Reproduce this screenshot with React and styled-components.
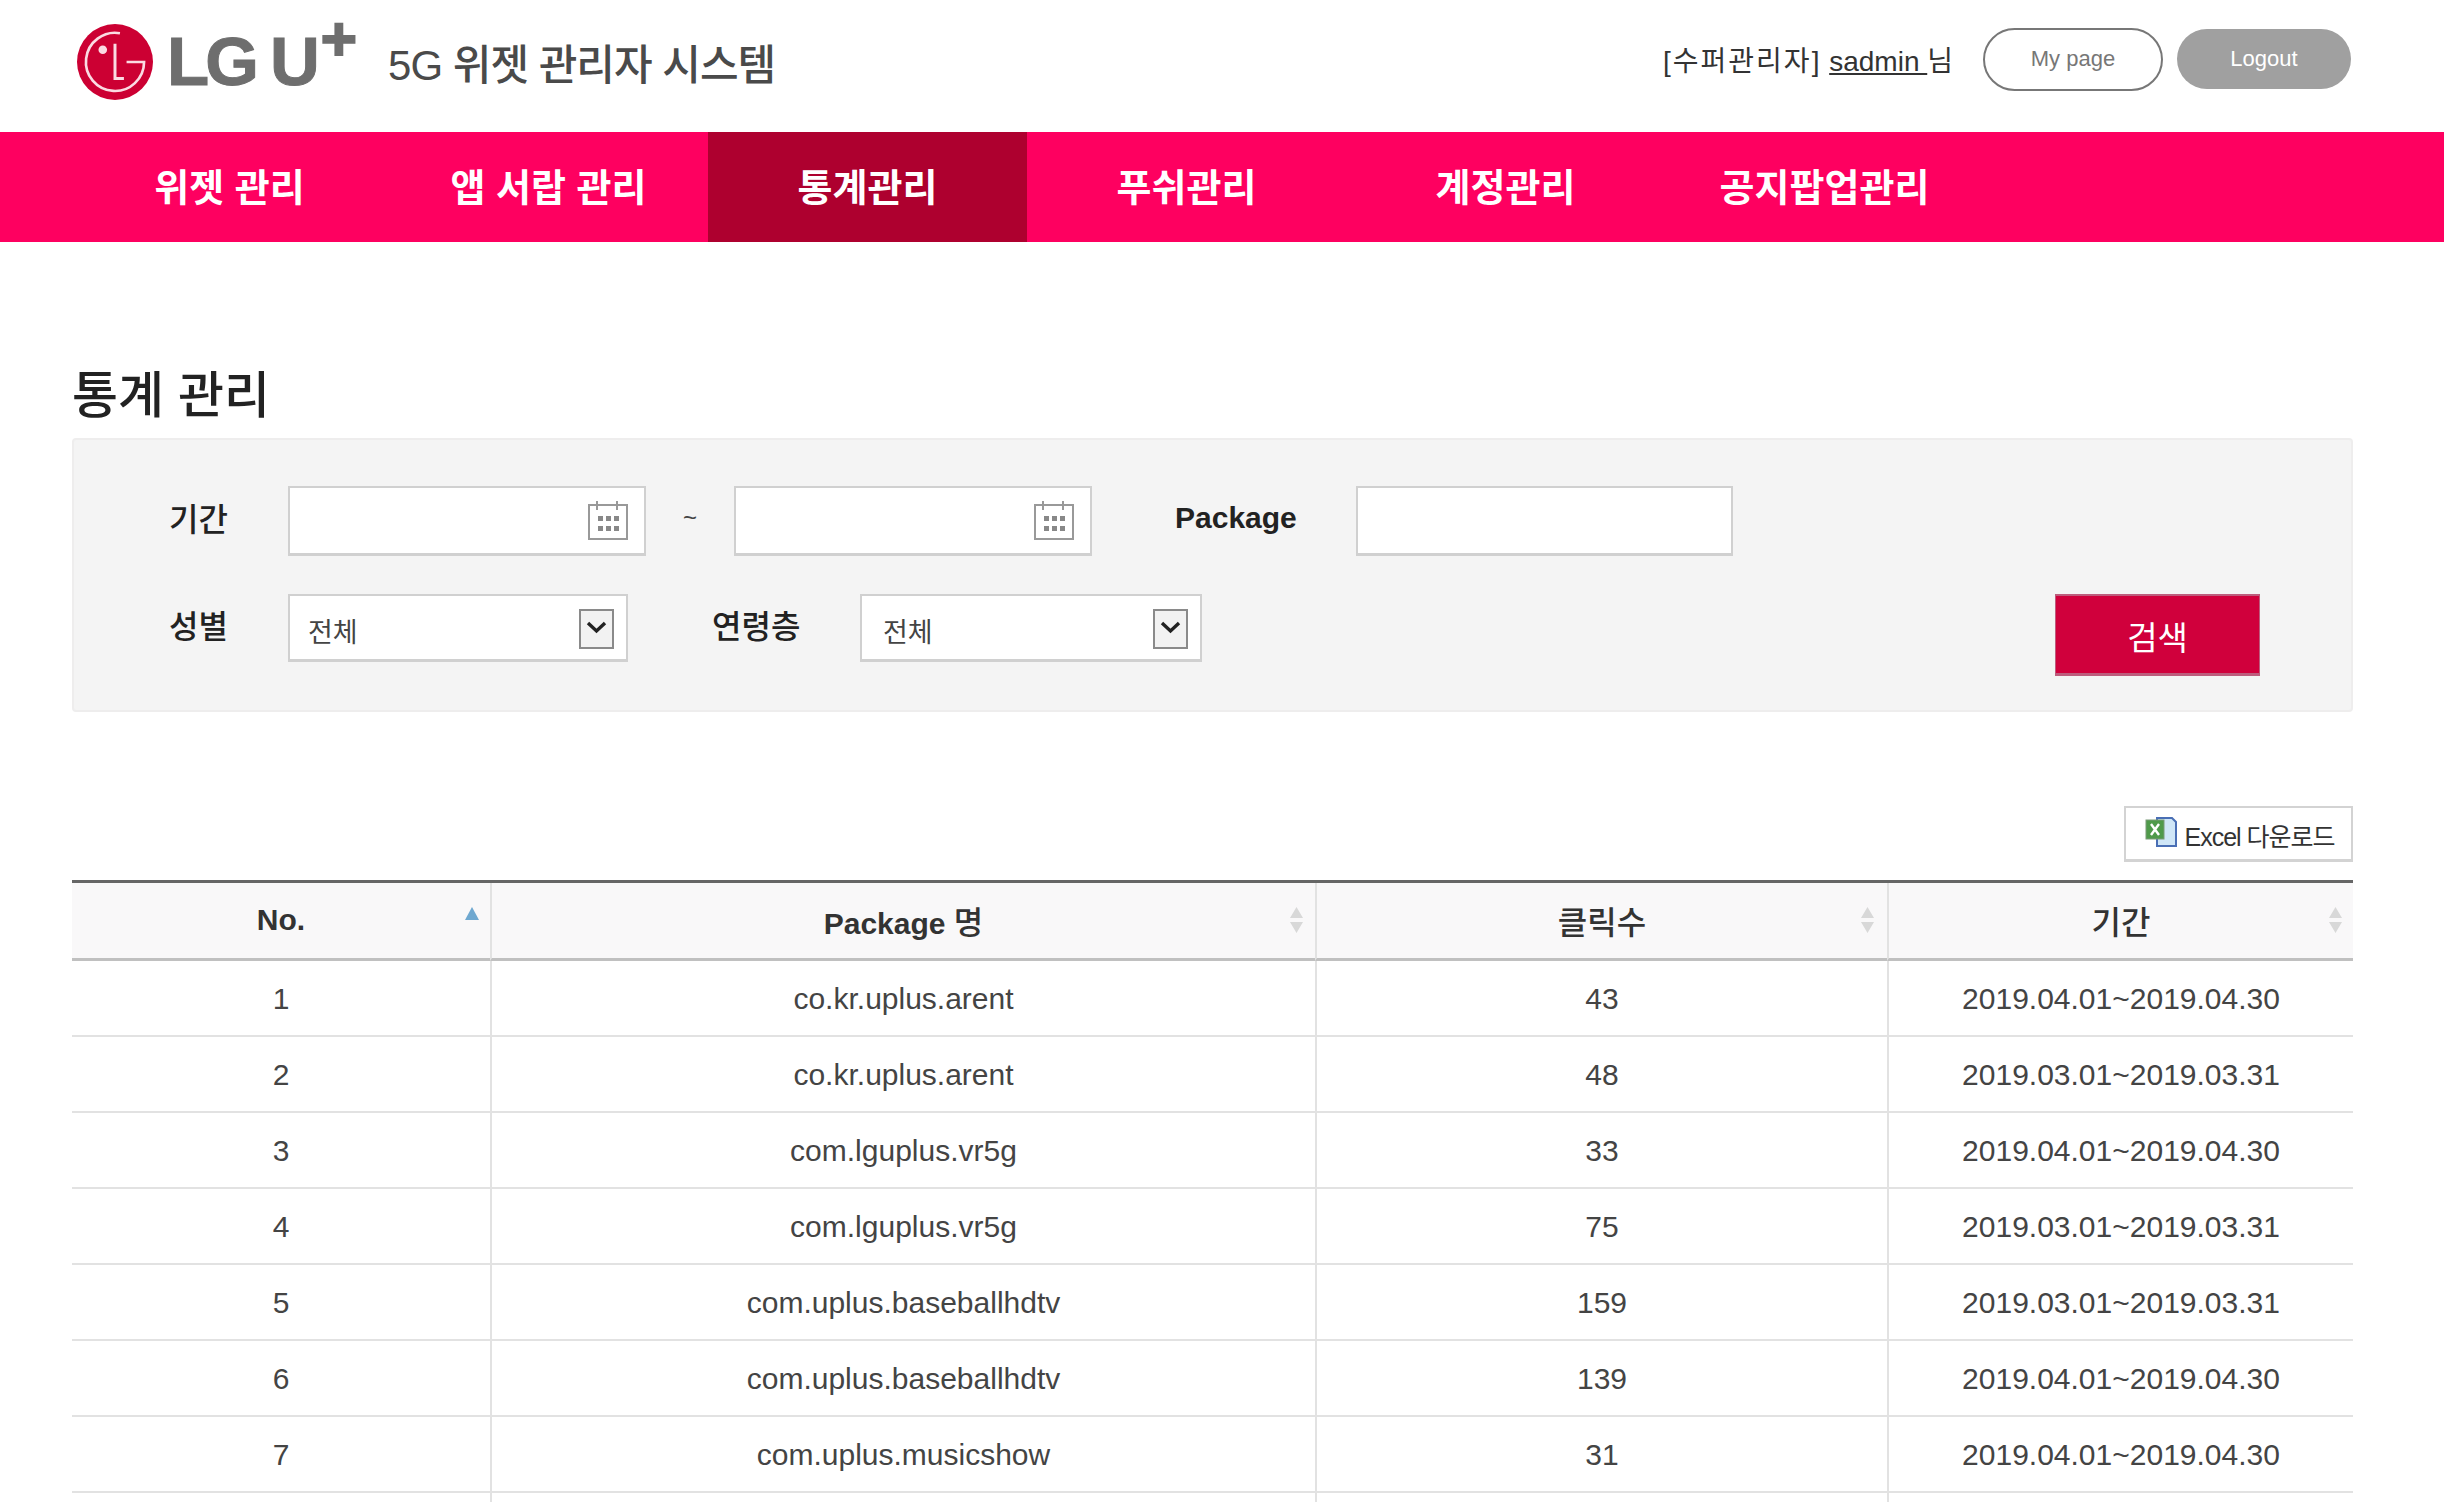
import React from 'react';
import styled, { createGlobalStyle } from 'styled-components';

const GlobalStyle = createGlobalStyle`
html, body {
  margin: 0;
  padding: 0;
  background: #fff;
  overflow: hidden;
}
body {
  font-family: "Liberation Sans", "Noto Sans CJK KR", sans-serif;
  color: #444;
}
* {
  box-sizing: border-box;
}
`;

const Page = styled.div`
  width: 2444px;
  height: 1502px;
  overflow: hidden;
`;

const Header = styled.header`
  display: flex;
  align-items: center;
  height: 132px;
  padding: 0 93px 9px 77px;
`;
const Brand = styled.div`
  display: flex;
  align-items: center;
  gap: 14px;
`;
const Wordmark = styled.span`
  display: flex;
  font-size: 69px;
  line-height: 76px;
  font-weight: 700;
  letter-spacing: -4px;
  color: #6e6e6e;
  -webkit-text-stroke: 1px #6e6e6e;
  b {
    font-size: 62px;
    line-height: 30px;
    letter-spacing: 0;
    margin-left: 5px;
    align-self: flex-start;
    -webkit-text-stroke: 2px #6e6e6e;
  }
`;
const SystemTitle = styled.h1`
  margin: 0 0 0 17px;
  font-size: 42px;
  font-weight: 500;
  color: #4a4a4a;
  letter-spacing: -1px;
`;
const UserArea = styled.div`
  display: flex;
  align-items: center;
  margin-left: auto;
  margin-bottom: 5px;
`;
const UserText = styled.span`
  font-size: 28px;
  color: #333;
  white-space: pre;
  margin-right: 30px;
  em {
    font-style: normal;
    letter-spacing: 2px;
  }
  a {
    color: #333;
    text-decoration: underline;
  }
`;
const PillButton = styled.button`
  display: block;
  height: ${(p) => (p.$filled ? '60px' : '63px')};
  width: ${(p) => (p.$filled ? '174px' : '180px')};
  margin-left: ${(p) => (p.$filled ? '14px' : '0')};
  border: ${(p) => (p.$filled ? 'none' : '2px solid #777')};
  border-radius: 32px;
  background: ${(p) => (p.$filled ? '#a0a0a0' : '#fff')};
  color: ${(p) => (p.$filled ? '#fff' : '#777')};
  font-family: inherit;
  font-size: 22px;
  padding: 0;
`;

const Nav = styled.nav`
  display: flex;
  height: 110px;
  padding-left: 70px;
  background: #fe0060;
`;
const NavItem = styled.a`
  display: flex;
  align-items: center;
  justify-content: center;
  width: 319px;
  padding-bottom: 6px;
  font-size: 38px;
  font-weight: 700;
  color: #fff;
  background: ${(p) => (p.$active ? '#ae002f' : 'transparent')};
`;

const Main = styled.main`
  padding: 0 91px 0 72px;
`;
const PageTitle = styled.h2`
  display: flex;
  align-items: flex-end;
  height: 196px;
  margin: 0;
  padding-bottom: 12px;
  font-size: 50px;
  line-height: 60px;
  font-weight: 500;
  color: #222;
`;

const SearchPanel = styled.section`
  display: flex;
  height: 274px;
  padding: 46px 91px 0 95px;
  background: #f4f4f4;
  border: 2px solid #eeeded;
  border-radius: 4px;
`;
const SearchRows = styled.div`
  flex: 1;
`;
const SearchRow = styled.div`
  display: flex;
  align-items: center;
  height: ${(p) => p.$height};
  margin-bottom: ${(p) => p.$gap || '0'};
`;
const Label = styled.label`
  width: ${(p) => p.$width};
  margin-left: ${(p) => p.$offset || '0'};
  margin-bottom: ${(p) => (p.$latin ? '6px' : '8px')};
  font-size: ${(p) => (p.$latin ? '30px' : '32px')};
  font-weight: ${(p) => (p.$latin ? 700 : 500)};
  color: #222;
  white-space: nowrap;
  flex: none;
`;
const Field = styled.div`
  display: flex;
  align-items: center;
  width: ${(p) => p.$width};
  height: 70px;
  margin-left: ${(p) => p.$offset || '0'};
  padding-right: 16px;
  background: #fff;
  border: 2px solid #d0d0d0;
  border-bottom-width: 3px;
  flex: none;
  input {
    flex: 1;
    min-width: 0;
    height: 100%;
    border: none;
    outline: none;
    background: transparent;
  }
`;
const Tilde = styled.span`
  width: 88px;
  margin-bottom: 6px;
  text-align: center;
  font-size: 24px;
  color: #444;
  flex: none;
`;
const SelectBox = styled.div`
  display: flex;
  align-items: center;
  justify-content: space-between;
  width: ${(p) => p.$width};
  height: 68px;
  margin-left: ${(p) => p.$offset || '0'};
  padding: 0 12px 0 ${(p) => p.$indent || '18px'};
  background: #fff;
  border: 2px solid #d0d0d0;
  border-bottom-width: 3px;
  font-size: 27px;
  color: #444;
  flex: none;
  span {
    margin-top: 6px;
  }
`;
const SelectArrow = styled.i`
  display: flex;
  align-items: center;
  justify-content: center;
  width: 35px;
  height: 40px;
  margin-top: 3px;
  padding-bottom: 4px;
  background: #f2f2f2;
  border: 2px solid #8a8a8a;
`;
const SearchButton = styled.button`
  width: 205px;
  height: 82px;
  margin-top: 108px;
  padding: 3px 0 0;
  background: #d0003c;
  border: none;
  border-top: 2px solid #bd5c7c;
  border-bottom: 3px solid #bd5c7c;
  border-left: 1px solid #bd5c7c;
  border-right: 1px solid #bd5c7c;
  color: #fff;
  font-family: inherit;
  font-size: 33px;
  flex: none;
`;

const ToolRow = styled.div`
  display: flex;
  justify-content: flex-end;
  margin: 94px 0 18px;
`;
const ExcelButton = styled.button`
  display: flex;
  align-items: center;
  justify-content: center;
  gap: 7px;
  width: 229px;
  height: 56px;
  padding: 3px 0 0 3px;
  background: #fff;
  border: 2px solid #d3d3d3;
  border-bottom-width: 3px;
  font-family: inherit;
  font-size: 25px;
  letter-spacing: -1px;
  color: #333;
  svg {
    margin-bottom: 6px;
  }
`;

const Table = styled.table`
  width: 2281px;
  table-layout: fixed;
  border-collapse: separate;
  border-spacing: 0;
  border-top: 3px solid #666;
`;
const HeadCell = styled.th`
  position: relative;
  width: ${(p) => p.$width};
  height: 78px;
  padding: 0 0 2px;
  background: #f9f8f9;
  border-bottom: 3px solid #c0c0c0;
  border-left: ${(p) => (p.$first ? 'none' : '2px solid #e2e2e2')};
  font-size: 30px;
  font-weight: 700;
  color: #333;
  span {
    font-size: 32px;
    font-weight: 500;
  }
`;
const SortMark = styled.svg`
  position: absolute;
  top: 24px;
  right: ${(p) => p.$right};
`;
const Cell = styled.td`
  height: 76px;
  padding: 2px 0 0;
  border-bottom: 2px solid #e2e2e2;
  border-left: ${(p) => (p.$first ? 'none' : '2px solid #e2e2e2')};
  text-align: center;
  font-size: 30px;
  color: #444;
`;

const LogoMark = () => (
  <svg width="76" height="76" viewBox="0 0 230 230">
    <circle cx="115" cy="115" r="115" fill="#cc0033" />
    <path d="M130 28A88 88 0 1 0 203 115H150" fill="none" stroke="#fbdbe3" strokeWidth="8" />
    <circle cx="78" cy="78" r="13" fill="#fbdbe3" />
    <path d="M115 60V165H142" fill="none" stroke="#fbdbe3" strokeWidth="9" />
  </svg>
);

const CalendarIcon = () => (
  <svg width="40" height="39" viewBox="0 0 40 39">
    <rect x="1" y="4" width="38" height="34" fill="#fff" stroke="#999" strokeWidth="2" />
    <path d="M9 0V9M29 0V9" stroke="#999" strokeWidth="2" />
    {[10, 18, 26].map((x) =>
      [15, 25].map((y) => <rect key={`${x}-${y}`} x={x} y={y} width="5" height="5" fill="#888" />)
    )}
  </svg>
);

const ChevronIcon = () => (
  <svg width="21" height="13" viewBox="0 0 21 13">
    <path d="M2 2L10.5 10L19 2" fill="none" stroke="#222" strokeWidth="3.4" />
  </svg>
);

const ExcelIcon = () => (
  <svg width="32" height="31" viewBox="0 0 32 31">
    <path d="M12 1H27L31 5V29H12Z" fill="#cfe6f7" stroke="#4a6fb5" strokeWidth="2" />
    <rect x="1" y="3" width="18" height="19" fill="#4f9a4a" stroke="#7b9a78" />
    <path d="M6 7L14 18M14 7L6 18" stroke="#fff" strokeWidth="2.4" />
  </svg>
);

const SortIcon = ({ active, right }) => (
  active ? (
    <SortMark $right={right} width="14" height="13" viewBox="0 0 14 13">
      <path d="M7 0L14 13H0Z" fill="#6fa8d0" />
    </SortMark>
  ) : (
    <SortMark $right={right} width="13" height="26" viewBox="0 0 13 26">
      <path d="M6.5 0L13 11H0ZM6.5 26L0 15H13Z" fill="#d8d8d8" />
    </SortMark>
  )
);

const menus = ['위젯 관리', '앱 서랍 관리', '통계관리', '푸쉬관리', '계정관리', '공지팝업관리'];

const rows = [
  [1, 'co.kr.uplus.arent', 43, '2019.04.01~2019.04.30'],
  [2, 'co.kr.uplus.arent', 48, '2019.03.01~2019.03.31'],
  [3, 'com.lguplus.vr5g', 33, '2019.04.01~2019.04.30'],
  [4, 'com.lguplus.vr5g', 75, '2019.03.01~2019.03.31'],
  [5, 'com.uplus.baseballhdtv', 159, '2019.03.01~2019.03.31'],
  [6, 'com.uplus.baseballhdtv', 139, '2019.04.01~2019.04.30'],
  [7, 'com.uplus.musicshow', 31, '2019.04.01~2019.04.30'],
  ['', '', '', ''],
];

const App = () => {
  return (
    <Page>
      <GlobalStyle />
      <Header>
        <Brand>
          <LogoMark />
          <Wordmark>LG U<b>+</b></Wordmark>
          <SystemTitle>5G 위젯 관리자 시스템</SystemTitle>
        </Brand>
        <UserArea>
          <UserText><em>[수퍼관리자]</em> <a href="#user">sadmin </a>님</UserText>
          <PillButton>My page</PillButton>
          <PillButton $filled>Logout</PillButton>
        </UserArea>
      </Header>
      <Nav>
        {menus.map((menu) => (
          <NavItem key={menu} $active={menu === '통계관리'}>{menu}</NavItem>
        ))}
      </Nav>
      <Main>
        <PageTitle>통계 관리</PageTitle>
        <SearchPanel>
          <SearchRows>
            <SearchRow $height="70px" $gap="38px">
              <Label $width="119px">기간</Label>
              <Field $width="358px"><input /><CalendarIcon /></Field>
              <Tilde>~</Tilde>
              <Field $width="358px"><input /><CalendarIcon /></Field>
              <Label $width="120px" $offset="83px" $latin>Package</Label>
              <Field $width="377px" $offset="61px"><input /></Field>
            </SearchRow>
            <SearchRow $height="68px">
              <Label $width="119px">성별</Label>
              <SelectBox $width="340px"><span>전체</span><SelectArrow><ChevronIcon /></SelectArrow></SelectBox>
              <Label $width="88px" $offset="84px">연령층</Label>
              <SelectBox $width="342px" $offset="60px" $indent="21px"><span>전체</span><SelectArrow><ChevronIcon /></SelectArrow></SelectBox>
            </SearchRow>
          </SearchRows>
          <SearchButton>검색</SearchButton>
        </SearchPanel>
        <ToolRow>
          <ExcelButton><ExcelIcon />Excel 다운로드</ExcelButton>
        </ToolRow>
        <Table>
          <thead>
            <tr>
              <HeadCell $first $width="418px">No.<SortIcon active right="11px" /></HeadCell>
              <HeadCell $width="825px">Package <span>명</span><SortIcon right="12px" /></HeadCell>
              <HeadCell $width="572px"><span>클릭수</span><SortIcon right="13px" /></HeadCell>
              <HeadCell $width="466px"><span>기간</span><SortIcon right="11px" /></HeadCell>
            </tr>
          </thead>
          <tbody>
            {rows.map((row, i) => (
              <tr key={i}>
                {row.map((value, j) => (
                  <Cell key={j} $first={j === 0}>{value}</Cell>
                ))}
              </tr>
            ))}
          </tbody>
        </Table>
      </Main>
    </Page>
  );
};

export default App;
